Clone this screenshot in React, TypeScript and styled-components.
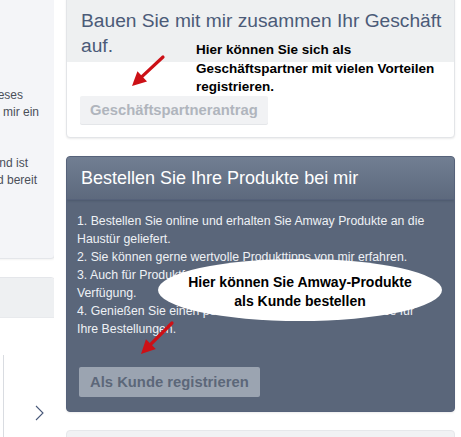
import React from "react";
import styled, { createGlobalStyle } from "styled-components";

const Global = createGlobalStyle`
  html, body { margin: 0; padding: 0; background: #ffffff; }
  body { font-family: "Liberation Sans", Arial, sans-serif; overflow: hidden; }
`;

const Page = styled.div`
  position: relative;
  width: 461px;
  height: 437px;
  overflow: hidden;
  display: flex;
  gap: 12px;
  align-items: flex-start;
`;

const LeftCol = styled.div`
  width: 54px;
  flex: none;
  overflow: hidden;
  display: flex;
  flex-direction: column;
  gap: 18px;
  margin-top: -6px;
`;

const LeftPanel = styled.div<{ $h: number; $bg: string }>`
  width: 300px;
  margin-left: -247px;
  height: ${(p) => p.$h}px;
  flex: none;
  background: ${(p) => p.$bg};
  border: 1px solid #e4e6ea;
  border-radius: 4px;
  box-shadow: 0 1px 2px rgba(0, 0, 0, 0.05);
  display: flex;
  flex-direction: column;
  overflow: hidden;
`;

const LeftText = styled.div`
  padding-top: 92px;
  font-size: 12px;
  line-height: 17px;
  color: #4a4f58;
  display: flex;
  flex-direction: column;
  align-items: flex-end;
`;

const LeftLine = styled.div<{ $inset: number }>`
  white-space: nowrap;
  padding-right: ${(p) => p.$inset}px;
  height: 17px;
`;

const LeftHead = styled.div`
  flex: none;
  height: 39px;
  background: #eef0f2;
  border-bottom: 1px solid #e8eaed;
`;

const LeftBody = styled.div`
  flex: 1;
  min-height: 0;
  background: #ffffff;
  position: relative;
  display: flex;
  align-items: flex-start;
  padding-top: 37px;
`;

const InnerBox = styled.div`
  flex: 1;
  height: 120px;
  border-right: 1px solid #d9dce1;
  margin-right: 50px;
`;

const Chevron = styled.div`
  position: absolute;
  right: 10px;
  top: 87px;
  width: 9px;
  height: 16px;
  display: flex;
`;

const RightCol = styled.div`
  width: 389px;
  flex: none;
  display: flex;
  flex-direction: column;
  gap: 18px;
  margin-top: -4px;
`;

const Panel = styled.div<{ $dark?: boolean }>`
  border: 1px solid ${(p) => (p.$dark ? "#56627a" : "#e3e5e8")};
  border-radius: 4px;
  background: ${(p) => (p.$dark ? "#5a667a" : "#ffffff")};
  box-shadow: 0 1px 2px rgba(0, 0, 0, 0.08);
  overflow: hidden;
`;

const LightHead = styled.div`
  background: #eef0f1;
  padding: 11px 0 4px 14px;
  font-size: 19.2px;
  line-height: 25px;
  color: #4b5b78;
  white-space: nowrap;
`;

const LightBody = styled.div`
  padding: 34px 13px 13px 13px;
`;

const DarkHead = styled.div`
  height: 42px;
  display: flex;
  align-items: center;
  padding: 0 14px;
  background: linear-gradient(#717e92, #5d697d);
  color: #ffffff;
  font-size: 18px;
  border-bottom: 1px solid #56627a;
  box-shadow: 0 1px 2px rgba(40, 50, 70, 0.25);
`;

const DarkBody = styled.div`
  padding: 12px 14px 14px 10px;
  color: #eef1f5;
  font-size: 12.3px;
  line-height: 18px;
`;

const Steps = styled.div`
  margin-bottom: 29px;
`;

const Button = styled.div<{ $variant: "light" | "dark" }>`
  display: inline-flex;
  align-items: center;
  height: ${(p) => (p.$variant === "light" ? 28 : 30)}px;
  padding: 0 ${(p) => (p.$variant === "light" ? 10 : 11)}px;
  margin-left: ${(p) => (p.$variant === "light" ? 0 : 2)}px;
  border-radius: 2px;
  font-weight: bold;
  font-size: 14.8px;
  background: ${(p) => (p.$variant === "light" ? "#f1f2f4" : "#9ba4b1")};
  color: ${(p) => (p.$variant === "light" ? "#b0b5bd" : "#5c6779")};
  box-shadow: ${(p) => (p.$variant === "light" ? "0 1px 0 #e4e6e9" : "none")};
`;

const StubPanel = styled.div`
  height: 40px;
  background: #f1f2f4;
  border: 1px solid #e6e8eb;
  border-radius: 4px;
`;

const Note = styled.div<{ $x: number; $y: number }>`
  position: absolute;
  left: ${(p) => p.$x}px;
  top: ${(p) => p.$y}px;
  font-weight: bold;
  font-size: 13.5px;
  line-height: 18.5px;
  color: #000000;
`;

const Bubble = styled.div`
  position: absolute;
  left: 158px;
  top: 259px;
  width: 284px;
  height: 62px;
  border-radius: 50%;
  background: #ffffff;
  display: flex;
  flex-direction: column;
  align-items: center;
  justify-content: center;
  padding-top: 4px;
  box-sizing: border-box;
  font-weight: bold;
  font-size: 14px;
  line-height: 19px;
  color: #000000;
  text-align: center;
`;

const ArrowSvg = styled.svg`
  position: absolute;
  left: 0;
  top: 0;
  pointer-events: none;
`;

function Arrow({ x1, y1, x2, y2 }: { x1: number; y1: number; x2: number; y2: number }) {
  const dx = x2 - x1;
  const dy = y2 - y1;
  const len = Math.hypot(dx, dy);
  const ux = dx / len;
  const uy = dy / len;
  const head = 14;
  const half = 7;
  const bx = x2 - ux * head;
  const by = y2 - uy * head;
  const px = -uy;
  const py = ux;
  return (
    <g>
      <line x1={x1} y1={y1} x2={bx} y2={by} stroke="#cc1016" strokeWidth={3.2} strokeLinecap="round" />
      <polygon
        points={`${x2},${y2} ${bx + px * half},${by + py * half} ${bx - px * half},${by - py * half}`}
        fill="#cc1016"
      />
    </g>
  );
}

export default function App() {
  return (
    <>
      <Global />
      <Page>
        <LeftCol>
          <LeftPanel $h={263} $bg="#f4f5f8">
            <LeftText>
              <LeftLine $inset={31}>Sie finden hier alles rund um dieses</LeftLine>
              <LeftLine $inset={15}>Thema und können gerne mit mir ein</LeftLine>
              <LeftLine $inset={80}>Gespräch führen.</LeftLine>
              <LeftLine $inset={80}>&nbsp;</LeftLine>
              <LeftLine $inset={26}>Ich freue mich auf Sie und ist</LeftLine>
              <LeftLine $inset={17}>immer für Sie da und bereit</LeftLine>
            </LeftText>
          </LeftPanel>
          <LeftPanel $h={200} $bg="#ffffff">
            <LeftHead />
            <LeftBody>
              <InnerBox />
              <Chevron>
                <svg width="9" height="16" viewBox="0 0 9 16">
                  <polyline points="1,1 8,8 1,15" fill="none" stroke="#4a5a7a" strokeWidth="1.1" />
                </svg>
              </Chevron>
            </LeftBody>
          </LeftPanel>
        </LeftCol>

        <RightCol>
          <Panel>
            <LightHead>
              Bauen Sie mit mir zusammen Ihr Geschäft
              <br />
              auf.
            </LightHead>
            <LightBody>
              <Button $variant="light">Geschäftspartnerantrag</Button>
            </LightBody>
          </Panel>

          <Panel $dark>
            <DarkHead>Bestellen Sie Ihre Produkte bei mir</DarkHead>
            <DarkBody>
              <Steps>
                1. Bestellen Sie online und erhalten Sie Amway Produkte an die
                <br />
                Haustür geliefert.
                <br />
                2. Sie können gerne wertvolle Produkttipps von mir erfahren.
                <br />
                3. Auch für Produktfragen stehe ich Ihnen gerne zur
                <br />
                Verfügung.
                <br />
                4. Genießen Sie einen persönlichen und schnellen Service für
                <br />
                Ihre Bestellungen.
              </Steps>
              <Button $variant="dark">Als Kunde registrieren</Button>
            </DarkBody>
          </Panel>

          <StubPanel />
        </RightCol>

        <Note $x={196} $y={41}>
          Hier können Sie sich als
          <br />
          Geschäftspartner mit vielen Vorteilen
          <br />
          registrieren.
        </Note>

        <Bubble>
          <div>Hier können Sie Amway-Produkte</div>
          <div>als Kunde bestellen</div>
        </Bubble>

        <ArrowSvg width="461" height="437" viewBox="0 0 461 437">
          <Arrow x1={163} y1={57} x2={132} y2={86} />
          <Arrow x1={172} y1={323} x2={141} y2={354} />
        </ArrowSvg>
      </Page>
    </>
  );
}
